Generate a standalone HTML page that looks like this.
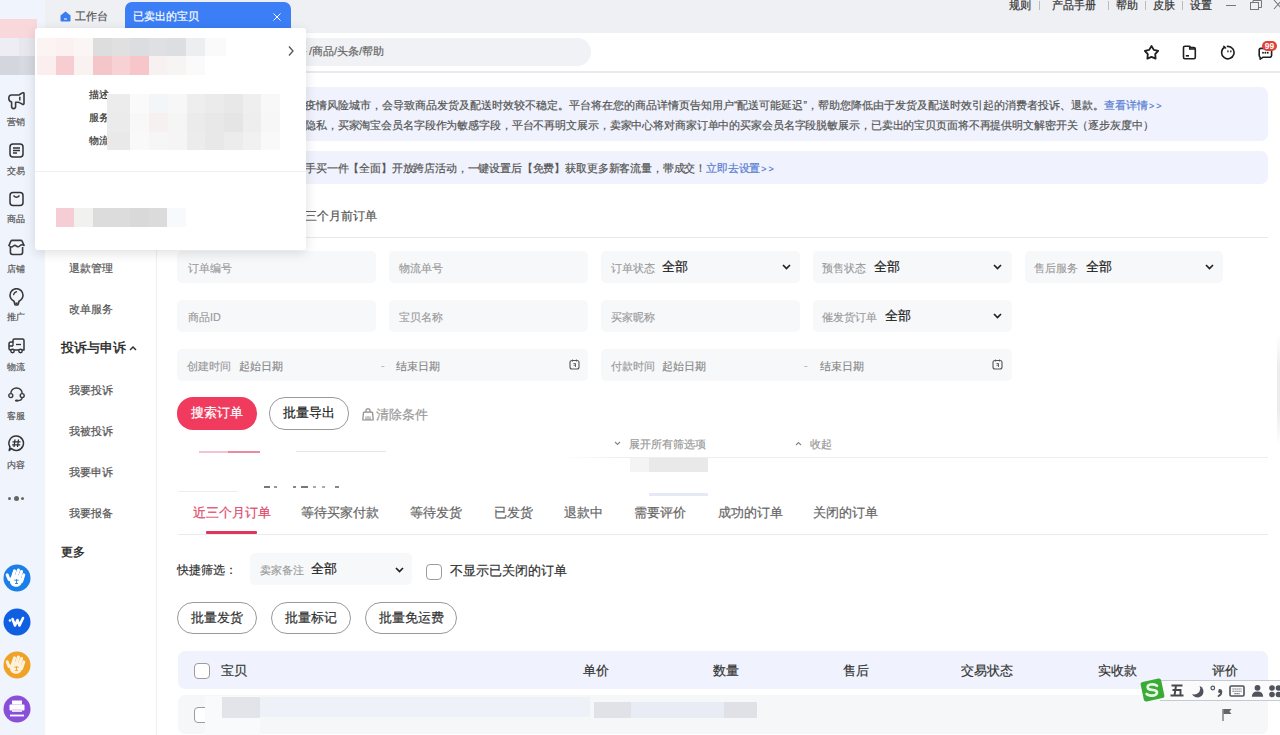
<!DOCTYPE html>
<html><head><meta charset="utf-8">
<style>
html,body{margin:0;padding:0}
body{width:1280px;height:735px;overflow:hidden;position:relative;background:#fff;font-family:"Liberation Sans",sans-serif;color:#333}
.a{position:absolute;white-space:nowrap;line-height:1}
.t{position:absolute;white-space:nowrap;line-height:14px;height:14px;-webkit-text-stroke:0.2px currentColor}
.inp{position:absolute;background:#f7f8fa;border-radius:5px;height:32px}
.ph{position:absolute;font-size:10.8px;color:#9a9a9a;line-height:14px;white-space:nowrap;-webkit-text-stroke:0.15px currentColor}
.val{position:absolute;font-size:13px;color:#222;line-height:14px;white-space:nowrap;-webkit-text-stroke:0.2px currentColor}
.btn{position:absolute;height:30px;border:1px solid #9a9a9a;border-radius:16px;box-sizing:border-box;font-size:12.5px;color:#333;line-height:28px;text-align:center;white-space:nowrap;-webkit-text-stroke:0.2px currentColor}
.mz{position:absolute}
.tf{display:inline-block;width:1em;-webkit-text-fill-color:transparent;-webkit-text-stroke:0 transparent;position:relative}
.tf::before{content:'';position:absolute;left:.06em;right:.06em;top:50%;height:.88em;margin-top:-.47em;background:currentColor;opacity:.39}
.tp::before{opacity:.1}
</style></head><body>

<!-- ===== top bar ===== -->
<div class="a" style="left:0;top:0;width:1280px;height:33px;background:#eef0f4"></div>
<!-- left sidebar -->
<div class="a" style="left:0;top:0;width:45px;height:735px;background:#f0f4fd"></div>

<!-- tab 工作台 -->
<svg class="a" style="left:60px;top:11px" width="11" height="11" viewBox="0 0 11 11"><path d="M5.5 0.5 L10.5 4.5 V9.5 Q10.5 10.5 9.5 10.5 H1.5 Q0.5 10.5 0.5 9.5 V4.5 Z" fill="#3b7cf0"/><rect x="4" y="7.5" width="3" height="1" fill="#fff"/></svg>
<div class="t" style="left:75px;top:9px;font-size:11px;color:#555">工作台</div>
<!-- active tab -->
<div class="a" style="left:125px;top:2px;width:166px;height:31px;background:#3b7ef6;border-radius:7px 7px 0 0"></div>
<div class="t" style="left:133px;top:9px;font-size:10.8px;color:#fff">已卖出的宝贝</div>
<svg class="a" style="left:273px;top:13px" width="8" height="8" viewBox="0 0 8 8"><path d="M0.5 0.5 L7.5 7.5 M7.5 0.5 L0.5 7.5" stroke="#fff" stroke-width="1"/></svg>

<!-- top right links -->
<div class="t" style="left:1009px;top:-2px;font-size:10.8px;color:#333">规则</div>
<div class="a" style="left:1039px;top:1px;width:1px;height:9px;background:#bbb"></div>
<div class="t" style="left:1052px;top:-2px;font-size:10.8px;color:#333">产品手册</div>
<div class="a" style="left:1108px;top:1px;width:1px;height:9px;background:#bbb"></div>
<div class="t" style="left:1116px;top:-2px;font-size:10.8px;color:#333">帮助</div>
<div class="a" style="left:1145px;top:1px;width:1px;height:9px;background:#bbb"></div>
<div class="t" style="left:1153px;top:-2px;font-size:10.8px;color:#333">皮肤</div>
<div class="a" style="left:1182px;top:1px;width:1px;height:9px;background:#bbb"></div>
<div class="t" style="left:1190px;top:-2px;font-size:10.8px;color:#333">设置</div>
<div class="a" style="left:1226px;top:5px;width:10px;height:1px;background:#777"></div>
<svg class="a" style="left:1249px;top:0px" width="14" height="11" viewBox="0 0 14 11"><rect x="1.5" y="2.5" width="8" height="7" fill="none" stroke="#777" stroke-width="1"/><path d="M4 2.5 V0.5 H12.5 V7.5 H9.5" fill="none" stroke="#777" stroke-width="1"/></svg>
<svg class="a" style="left:1273px;top:0px" width="8" height="10" viewBox="0 0 8 10"><path d="M1 0 L9 9 M9 0 L1 9" stroke="#777" stroke-width="1.1"/></svg>

<!-- ===== header bar ===== -->
<div class="a" style="left:45px;top:33px;width:1235px;height:38px;background:#fff"></div>
<div class="a" style="left:45px;top:71px;width:1235px;height:2px;background:#e9eaee"></div>
<div class="a" style="left:160px;top:38px;width:431px;height:28px;background:#f1f2f5;border-radius:14px"></div>
<div class="t" style="left:285px;top:44px;font-size:11px;color:#666">服务<span style="margin-left:2px">/商品/头条/帮助</span></div>

<!-- header icons -->
<svg class="a" style="left:1143px;top:44px" width="17" height="17" viewBox="0 0 17 17"><path d="M8.50 2.00 L10.79 5.84 L15.16 6.84 L12.21 10.21 L12.61 14.66 L8.50 12.90 L4.39 14.66 L4.79 10.21 L1.84 6.84 L6.21 5.84 Z" fill="none" stroke="#1f1f1f" stroke-width="1.8" stroke-linejoin="round"/></svg>
<svg class="a" style="left:1182px;top:45px" width="15" height="15" viewBox="0 0 15 15"><path d="M1.5 2.6 Q1.5 1.2 2.9 1.2 H7.6 L8.6 2.6 H11.9 Q13.3 2.6 13.3 4 V12.3 Q13.3 13.7 11.9 13.7 H2.9 Q1.5 13.7 1.5 12.3 Z" fill="none" stroke="#1f1f1f" stroke-width="1.6" stroke-linejoin="round"/><path d="M7.6 1.2 V4 H13.3" fill="none" stroke="#1f1f1f" stroke-width="1.3"/><rect x="3.8" y="10" width="3.2" height="1.6" fill="#1f1f1f"/></svg>
<svg class="a" style="left:1220px;top:45px" width="15" height="15" viewBox="0 0 15 15"><path d="M4.6 2.3 A6.2 6.2 0 1 0 7.5 1.4" fill="none" stroke="#1f1f1f" stroke-width="1.6" stroke-linecap="round"/><path d="M3.8 1.2 L5.6 3" stroke="#1f1f1f" stroke-width="1.5" stroke-linecap="round"/><rect x="7.3" y="5.2" width="1.3" height="2.2" rx="0.6" fill="#1f1f1f"/><rect x="10.2" y="5.2" width="1.3" height="2.2" rx="0.6" fill="#1f1f1f"/></svg>
<svg class="a" style="left:1258px;top:47px" width="15" height="13" viewBox="0 0 15 13"><path d="M1.2 3 Q1.2 1.4 2.8 1.4 H12 Q13.6 1.4 13.6 3 V8.6 Q13.6 10.2 12 10.2 H5.2 L2.2 12.2 V10.2 Q1.2 10 1.2 8.6 Z" fill="none" stroke="#1f1f1f" stroke-width="1.6" stroke-linejoin="round"/><circle cx="5" cy="5.8" r="0.95" fill="#1f1f1f"/><circle cx="7.4" cy="5.8" r="0.95" fill="#1f1f1f"/><circle cx="9.8" cy="5.8" r="0.95" fill="#1f1f1f"/></svg>
<div class="a" style="left:1262px;top:41px;width:15px;height:10px;border-radius:5px;background:#df4139;color:#fff;font-size:8.5px;line-height:10px;text-align:center;font-weight:bold">99</div>

<!-- ===== secondary sidebar ===== -->
<div class="a" style="left:156px;top:72px;width:1px;height:663px;background:#f0f0f2"></div>
<div class="t" style="left:69px;top:261px;font-size:11px;color:#555">退款管理</div>
<div class="t" style="left:69px;top:302px;font-size:11px;color:#555">改单服务</div>
<div class="t" style="left:61px;top:341px;font-size:12.6px;color:#222;-webkit-text-stroke:0.35px #222">投诉与申诉</div>
<svg class="a" style="left:129px;top:345px" width="8" height="6" viewBox="0 0 8 6"><path d="M1 5 L4 2 L7 5" fill="none" stroke="#333" stroke-width="1.5"/></svg>
<div class="t" style="left:69px;top:383px;font-size:11px;color:#555">我要投诉</div>
<div class="t" style="left:69px;top:424px;font-size:11px;color:#555">我被投诉</div>
<div class="t" style="left:69px;top:465px;font-size:11px;color:#555">我要申诉</div>
<div class="t" style="left:69px;top:506px;font-size:11px;color:#555">我要报备</div>
<div class="t" style="left:61px;top:545px;font-size:12.2px;color:#222;-webkit-text-stroke:0.35px #222">更多</div>

<!-- ===== left icon sidebar ===== -->
<!-- mosaic avatar blocks -->
<div class="mz" style="left:0;top:19px;width:37px;height:19px;background:#f8d8db"></div>
<div class="mz" style="left:0;top:38px;width:19px;height:18px;background:#eceef3"></div>
<div class="mz" style="left:19px;top:38px;width:18px;height:18px;background:#e6e8ed"></div>
<div class="mz" style="left:0;top:56px;width:19px;height:19px;background:#d3d6dd"></div>
<div class="mz" style="left:19px;top:56px;width:18px;height:19px;background:#d6d9e0"></div>

<svg class="a" style="left:8px;top:92px" width="18" height="18" viewBox="0 0 18 18"><path d="M3.5 3 L10 3 Q11 3 12 2.3 L14.5 0.9 Q16 0.2 16 1.8 V11.3 Q16 12.9 14.5 12.2 L12 10.9 Q11 10.3 10 10.3 H7.6 V14.6 Q7.6 16.6 5.6 16.6 Q3.6 16.6 3.6 14.6 V10 Q0.8 9.5 0.8 6.6 Q0.8 3 3.5 3 Z" fill="none" stroke="#3a3a3a" stroke-width="1.6" stroke-linejoin="round"/><path d="M11.8 5.3 V8" stroke="#3a3a3a" stroke-width="1.5" stroke-linecap="round"/></svg>
<div class="t" style="left:7px;top:115px;font-size:9px;color:#555">营销</div>
<svg class="a" style="left:9px;top:143px" width="15" height="15" viewBox="0 0 15 15"><rect x="1" y="1" width="13" height="13" rx="3" fill="none" stroke="#333" stroke-width="1.5"/><path d="M4 5 H11 M4 7.5 H11 M4 10 H8" stroke="#333" stroke-width="1.4"/></svg>
<div class="t" style="left:7px;top:164px;font-size:9px;color:#555">交易</div>
<svg class="a" style="left:9px;top:191px" width="15" height="16" viewBox="0 0 15 16"><rect x="1" y="1.5" width="13" height="13" rx="3" fill="none" stroke="#333" stroke-width="1.5"/><path d="M4.5 4.5 Q7.5 8 10.5 4.5" fill="none" stroke="#333" stroke-width="1.4"/></svg>
<div class="t" style="left:7px;top:212px;font-size:9px;color:#555">商品</div>
<svg class="a" style="left:8px;top:239px" width="17" height="17" viewBox="0 0 17 17"><path d="M1 6.4 L2.8 2.3 Q3.2 1.4 4.3 1.4 H12.7 Q13.8 1.4 14.2 2.3 L16 6.4" fill="none" stroke="#3a3a3a" stroke-width="1.6" stroke-linejoin="round" stroke-linecap="round"/><path d="M2.4 8 V13.3 Q2.4 15.5 4.6 15.5 H12.4 Q14.6 15.5 14.6 13.3 V8" fill="none" stroke="#3a3a3a" stroke-width="1.6"/><path d="M1 6.4 Q3.2 9.2 5.4 7 Q6.9 5.7 8.5 7.1 Q10.1 8.5 11.6 7 Q13.8 4.9 16 6.4" fill="none" stroke="#3a3a3a" stroke-width="1.5" stroke-linejoin="round"/></svg>
<div class="t" style="left:7px;top:262px;font-size:9px;color:#555">店铺</div>
<svg class="a" style="left:9px;top:288px" width="15" height="18" viewBox="0 0 15 18"><path d="M5 13.2 Q1 11 1 7.2 A6.5 6.5 0 0 1 14 7.2 Q14 11 10 13.2 L9.2 16.2 Q9 17 8.2 17 H6.8 Q6 17 5.8 16.2 Z" fill="none" stroke="#3a3a3a" stroke-width="1.6" stroke-linejoin="round"/><path d="M4.6 6.6 Q5.2 4.4 7.4 3.8" fill="none" stroke="#3a3a3a" stroke-width="1.4" stroke-linecap="round"/><path d="M6.3 15.5 H8.7" stroke="#3a3a3a" stroke-width="2"/></svg>
<div class="t" style="left:7px;top:310px;font-size:9px;color:#555">推广</div>
<svg class="a" style="left:8px;top:338px" width="17" height="16" viewBox="0 0 17 16"><path d="M1 6 Q1 4 3 4 H5 V2.5 Q5 1 6.5 1 H14.5 Q16 1 16 2.5 V12 H2.5 Q1 12 1 10.5 Z" fill="none" stroke="#333" stroke-width="1.5" stroke-linejoin="round"/><path d="M1 8 H5 M5 4 V8" stroke="#333" stroke-width="1.3"/><circle cx="4.5" cy="13" r="1.7" fill="#eef2fb" stroke="#333" stroke-width="1.4"/><circle cx="12.5" cy="13" r="1.7" fill="#eef2fb" stroke="#333" stroke-width="1.4"/><path d="M8 6.5 H13" stroke="#333" stroke-width="1.3"/></svg>
<div class="t" style="left:7px;top:360px;font-size:9px;color:#555">物流</div>
<svg class="a" style="left:8px;top:386px" width="17" height="17" viewBox="0 0 17 17"><path d="M2.8 7.6 A5.7 5.7 0 0 1 14.2 7.6" fill="none" stroke="#3a3a3a" stroke-width="1.5"/><circle cx="2.8" cy="9.6" r="2" fill="none" stroke="#3a3a3a" stroke-width="1.4"/><circle cx="14.2" cy="9.6" r="2" fill="none" stroke="#3a3a3a" stroke-width="1.4"/><path d="M14.2 11.6 Q13.8 14.6 10 14.6" fill="none" stroke="#3a3a3a" stroke-width="1.3"/><ellipse cx="8.8" cy="14.6" rx="1.9" ry="1.2" fill="#3a3a3a"/></svg>
<div class="t" style="left:7px;top:409px;font-size:9px;color:#555">客服</div>
<svg class="a" style="left:8px;top:435px" width="17" height="17" viewBox="0 0 17 17"><path d="M8.5 1 A7.2 7.2 0 1 1 3.5 13.6 L1.2 15.5 L2 12 A7.2 7.2 0 0 1 8.5 1 Z" fill="none" stroke="#333" stroke-width="1.5" stroke-linejoin="round"/><path d="M7 4.5 L6 12 M10.5 4.5 L9.5 12 M4.5 6.8 H12.5 M4.2 9.8 H12.2" stroke="#333" stroke-width="1.3"/></svg>
<div class="t" style="left:7px;top:458px;font-size:9px;color:#555">内容</div>
<div class="a" style="left:8px;top:497px;width:3px;height:3px;border-radius:50%;background:#666"></div>
<div class="a" style="left:14px;top:496px;width:5px;height:5px;border-radius:50%;background:#666"></div>
<div class="a" style="left:21px;top:497px;width:3px;height:3px;border-radius:50%;background:#666"></div>

<!-- app circles -->
<svg class="a" style="left:2.5px;top:564px" width="28" height="28" viewBox="0 0 28 28"><circle cx="14" cy="14" r="13.5" fill="#1b7fe8"/><g transform="rotate(18 14 15)" fill="#fff"><ellipse cx="13.5" cy="17" rx="6.3" ry="6"/><rect x="7.6" y="6.5" width="3.2" height="11" rx="1.6"/><rect x="11" y="4.5" width="3.2" height="12" rx="1.6"/><rect x="14.4" y="5" width="3.2" height="12" rx="1.6"/><rect x="17.7" y="7.5" width="3" height="10" rx="1.5"/><rect x="3.5" y="12" width="3" height="8" rx="1.5" transform="rotate(-40 5 16)"/></g><path d="M11.3 16.2 H15.7 M13.5 15.2 V19.5 M12 19.5 H15" stroke="#1b7fe8" stroke-width="0.9"/></svg>
<svg class="a" style="left:2.5px;top:608px" width="28" height="28" viewBox="0 0 28 28"><circle cx="14" cy="14" r="13.5" fill="#0f5fe2"/><path d="M9.5 11 L12 17.5 L14.5 12 L16.5 17.5 L20 10" fill="none" stroke="#fff" stroke-width="2.6" stroke-linecap="round" stroke-linejoin="round"/><circle cx="7" cy="12.5" r="1.3" fill="#fff"/></svg>
<svg class="a" style="left:2.5px;top:651px" width="28" height="28" viewBox="0 0 28 28"><circle cx="14" cy="14" r="13.5" fill="#f0a226"/><g transform="rotate(18 14 15)" fill="#fdf1dc"><ellipse cx="13.5" cy="17" rx="6.3" ry="6"/><rect x="7.6" y="6.5" width="3.2" height="11" rx="1.6"/><rect x="11" y="4.5" width="3.2" height="12" rx="1.6"/><rect x="14.4" y="5" width="3.2" height="12" rx="1.6"/><rect x="17.7" y="7.5" width="3" height="10" rx="1.5"/><rect x="3.5" y="12" width="3" height="8" rx="1.5" transform="rotate(-40 5 16)"/></g><path d="M11.3 16.2 H15.7 M13.5 15.2 V19.5 M12 19.5 H15" stroke="#f0a226" stroke-width="0.9"/></svg>
<svg class="a" style="left:2.5px;top:695px" width="28" height="28" viewBox="0 0 28 28"><circle cx="14" cy="14" r="13.5" fill="#8a4fd8"/><rect x="9" y="5.5" width="10" height="4" fill="#fff"/><rect x="6.5" y="9.5" width="15" height="6" rx="1" fill="#fff"/><rect x="9" y="14" width="10" height="3" fill="#e8dcf8"/><path d="M7 20.5 H21" stroke="#fff" stroke-width="1.8"/></svg>

<!-- ===== main ===== -->
<!-- notice banners -->
<div class="a" style="left:168px;top:87px;width:1100px;height:54px;background:#f0f3fd;border-radius:7px"></div>
<div class="t" style="left:305px;top:98px;font-size:10.5px;color:#555">疫情风险城市，会导致商品发货及配送时效较不稳定。平台将在您的商品详情页告知用户“配送可能延迟”，帮助您降低由于发货及配送时效引起的消费者投诉、退款。<span style="color:#5a80d2">查看详情<span style="font-size:9px;letter-spacing:2px;margin-left:1px">&gt;&gt;</span></span></div>
<div class="t" style="left:305px;top:118px;font-size:10.5px;color:#555;letter-spacing:-0.12px">隐私，买家淘宝会员名字段作为敏感字段，平台不再明文展示，卖家中心将对商家订单中的买家会员名字段脱敏展示，已卖出的宝贝页面将不再提供明文解密开关（逐步灰度中）</div>
<div class="a" style="left:168px;top:151px;width:1100px;height:33px;background:#f0f3fd;border-radius:7px"></div>
<div class="t" style="left:305px;top:161px;font-size:10.5px;color:#555;letter-spacing:-0.16px">手买一件【全面】开放跨店活动，一键设置后【免费】获取更多新客流量，带成交！<span style="color:#5a80d2">立即去设置<span style="font-size:9px;letter-spacing:2px;margin-left:1px">&gt;&gt;</span></span></div>

<!-- order-age tabs -->
<div class="t" style="left:305px;top:209px;font-size:12px;color:#555">三个月前订单</div>
<div class="a" style="left:178px;top:237px;width:1090px;height:1px;background:#e8e8ea"></div>

<!-- form row 1 -->
<div class="inp" style="left:177px;top:251px;width:199px"></div>
<div class="ph" style="left:188px;top:261px">订单编号</div>
<div class="inp" style="left:389px;top:251px;width:199px"></div>
<div class="ph" style="left:399px;top:261px">物流单号</div>
<div class="inp" style="left:601px;top:251px;width:199px"></div>
<div class="ph" style="left:611px;top:261px">订单状态</div>
<div class="val" style="left:662px;top:260px">全部</div>
<svg class="a" style="left:782px;top:264px" width="9" height="6" viewBox="0 0 9 6"><path d="M1 1 L4.5 4.5 L8 1" fill="none" stroke="#222" stroke-width="1.7"/></svg>
<div class="inp" style="left:813px;top:251px;width:199px"></div>
<div class="ph" style="left:822px;top:261px">预售状态</div>
<div class="val" style="left:874px;top:260px">全部</div>
<svg class="a" style="left:993px;top:264px" width="9" height="6" viewBox="0 0 9 6"><path d="M1 1 L4.5 4.5 L8 1" fill="none" stroke="#222" stroke-width="1.7"/></svg>
<div class="inp" style="left:1025px;top:251px;width:198px"></div>
<div class="ph" style="left:1034px;top:261px">售后服务</div>
<div class="val" style="left:1086px;top:260px">全部</div>
<svg class="a" style="left:1205px;top:264px" width="9" height="6" viewBox="0 0 9 6"><path d="M1 1 L4.5 4.5 L8 1" fill="none" stroke="#222" stroke-width="1.7"/></svg>

<!-- form row 2 -->
<div class="inp" style="left:177px;top:300px;width:199px"></div>
<div class="ph" style="left:188px;top:310px">商品ID</div>
<div class="inp" style="left:389px;top:300px;width:199px"></div>
<div class="ph" style="left:399px;top:310px">宝贝名称</div>
<div class="inp" style="left:601px;top:300px;width:199px"></div>
<div class="ph" style="left:611px;top:310px">买家昵称</div>
<div class="inp" style="left:813px;top:300px;width:199px"></div>
<div class="ph" style="left:822px;top:310px">催发货订单</div>
<div class="val" style="left:885px;top:309px">全部</div>
<svg class="a" style="left:993px;top:313px" width="9" height="6" viewBox="0 0 9 6"><path d="M1 1 L4.5 4.5 L8 1" fill="none" stroke="#222" stroke-width="1.7"/></svg>

<!-- form row 3 -->
<div class="inp" style="left:177px;top:349px;width:411px"></div>
<div class="ph" style="left:187px;top:359px">创建时间</div>
<div class="ph" style="left:239px;top:359px;color:#888">起始日期</div>
<div class="ph" style="left:381px;top:358px;color:#bbb">-</div>
<div class="ph" style="left:396px;top:359px;color:#888">结束日期</div>
<svg class="a" style="left:569px;top:359px" width="11" height="11" viewBox="0 0 11 11"><rect x="1" y="1.5" width="9" height="8.5" rx="2" fill="none" stroke="#555" stroke-width="1.1"/><path d="M3.5 0.5 V2.5 M7.5 0.5 V2.5 M4.5 4.5 H6.5 V8 M4.5 6.2 H6.5" fill="none" stroke="#555" stroke-width="0.9"/></svg>
<div class="inp" style="left:601px;top:349px;width:411px"></div>
<div class="ph" style="left:611px;top:359px">付款时间</div>
<div class="ph" style="left:662px;top:359px;color:#888">起始日期</div>
<div class="ph" style="left:804px;top:358px;color:#bbb">-</div>
<div class="ph" style="left:820px;top:359px;color:#888">结束日期</div>
<svg class="a" style="left:992px;top:359px" width="11" height="11" viewBox="0 0 11 11"><rect x="1" y="1.5" width="9" height="8.5" rx="2" fill="none" stroke="#555" stroke-width="1.1"/><path d="M3.5 0.5 V2.5 M7.5 0.5 V2.5 M4.5 4.5 H6.5 V8 M4.5 6.2 H6.5" fill="none" stroke="#555" stroke-width="0.9"/></svg>

<!-- search buttons -->
<div class="btn" style="left:177px;top:397px;width:80px;height:33px;border:none;background:#f03b5e;color:#fff;line-height:33px;font-weight:500">搜索订单</div>
<div class="btn" style="left:269px;top:397px;width:80px;height:33px;line-height:31px;font-weight:500;color:#222">批量导出</div>
<svg class="a" style="left:362px;top:408px" width="12" height="13" viewBox="0 0 12 13"><path d="M4 4 V2.2 Q4 0.8 5.5 0.8 H6.5 Q8 0.8 8 2.2 V4" fill="none" stroke="#8a8a8a" stroke-width="1.2"/><path d="M2.4 4.2 H9.6 Q10.4 4.2 10.6 5 L11.2 12 H0.8 L1.4 5 Q1.6 4.2 2.4 4.2 Z" fill="none" stroke="#8a8a8a" stroke-width="1.2" stroke-linejoin="round"/><path d="M4 8.5 V12 M6 8 V12 M8 8.5 V12" stroke="#8a8a8a" stroke-width="1"/></svg>
<div class="t" style="left:376px;top:408px;font-size:12.6px;color:#999">清除条件</div>

<!-- expand filters -->
<svg class="a" style="left:614px;top:441px" width="7" height="5" viewBox="0 0 7 5"><path d="M1 1 L3.5 3.5 L6 1" fill="none" stroke="#888" stroke-width="1.2"/></svg>
<div class="t" style="left:629px;top:437px;font-size:10.7px;color:#999">展开所有筛选项</div>
<svg class="a" style="left:795px;top:441px" width="7" height="5" viewBox="0 0 7 5"><path d="M1 4 L3.5 1.5 L6 4" fill="none" stroke="#888" stroke-width="1.2"/></svg>
<div class="t" style="left:810px;top:437px;font-size:10.7px;color:#999">收起</div>
<div class="a" style="left:560px;top:457px;width:708px;height:1px;background:linear-gradient(90deg,rgba(240,240,243,0),#eeeef1 60px)"></div>
<div class="a" style="left:178px;top:491px;width:60px;height:1px;background:#ededed"></div>
<!-- ghost strip -->
<div class="a" style="left:199px;top:451px;width:60px;height:2px;background:#f4c3cf"></div>
<div class="a" style="left:228px;top:451px;width:32px;height:2px;background:#ea8aa2"></div>
<div class="a" style="left:296px;top:451px;width:90px;height:1px;background:#e6e6e6"></div>
<div class="a" style="left:630px;top:458px;width:19px;height:14px;background:#f4f4f4"></div>
<div class="a" style="left:649px;top:458px;width:59px;height:14px;background:#e9e9e9"></div>
<div class="a" style="left:649px;top:493px;width:59px;height:3px;background:#e4e9f5"></div>
<div class="a" style="left:264px;top:486px;width:6px;height:2px;background:#777"></div>
<div class="a" style="left:274px;top:486px;width:3px;height:2px;background:#999"></div>
<div class="a" style="left:293px;top:486px;width:3px;height:2px;background:#888"></div>
<div class="a" style="left:301px;top:486px;width:7px;height:2px;background:#777"></div>
<div class="a" style="left:313px;top:486px;width:3px;height:2px;background:#aaa"></div>
<div class="a" style="left:322px;top:486px;width:3px;height:2px;background:#aaa"></div>
<div class="a" style="left:335px;top:486px;width:4px;height:2px;background:#888"></div>

<!-- status tabs -->
<div class="t" style="left:193px;top:506px;font-size:12.6px;color:#e24a6c">近三个月订单</div>
<div class="a" style="left:206px;top:531px;width:51px;height:3px;background:#e0345c;border-radius:1px"></div>
<div class="t" style="left:301px;top:506px;font-size:12.6px;color:#666">等待买家付款</div>
<div class="t" style="left:410px;top:506px;font-size:12.6px;color:#666">等待发货</div>
<div class="t" style="left:494px;top:506px;font-size:12.6px;color:#666">已发货</div>
<div class="t" style="left:564px;top:506px;font-size:12.6px;color:#666">退款中</div>
<div class="t" style="left:634px;top:506px;font-size:12.6px;color:#666">需要评价</div>
<div class="t" style="left:718px;top:506px;font-size:12.6px;color:#666">成功的订单</div>
<div class="t" style="left:813px;top:506px;font-size:12.6px;color:#666">关闭的订单</div>
<div class="a" style="left:178px;top:534px;width:1090px;height:1px;background:#ebebed"></div>

<!-- quick filter -->
<div class="t" style="left:177px;top:563px;font-size:12px;color:#333">快捷筛选：</div>
<div class="inp" style="left:250px;top:553px;width:162px;height:32px"></div>
<div class="ph" style="left:260px;top:563px">卖家备注</div>
<div class="val" style="left:311px;top:562px">全部</div>
<svg class="a" style="left:395px;top:567px" width="9" height="6" viewBox="0 0 9 6"><path d="M1 1 L4.5 4.5 L8 1" fill="none" stroke="#222" stroke-width="1.7"/></svg>
<div class="a" style="left:426px;top:564px;width:16px;height:16px;box-sizing:border-box;border:1px solid #9c9c9c;border-radius:4px;background:#fff"></div>
<div class="t" style="left:450px;top:564px;font-size:12.5px;color:#333">不显示已关闭的订单</div>

<!-- batch buttons -->
<div class="btn" style="left:177px;top:602px;width:80px;height:32px;line-height:30px">批量发货</div>
<div class="btn" style="left:271px;top:602px;width:80px;height:32px;line-height:30px">批量标记</div>
<div class="btn" style="left:365px;top:602px;width:92px;height:32px;line-height:30px">批量免运费</div>

<!-- table header -->
<div class="a" style="left:178px;top:651px;width:1090px;height:38px;background:#f0f3fd;border-radius:7px"></div>
<div class="a" style="left:194px;top:663px;width:16px;height:16px;box-sizing:border-box;border:1px solid #9c9c9c;border-radius:4px;background:#fff"></div>
<div class="t" style="left:221px;top:664px;font-size:12.6px;color:#333">宝贝</div>
<div class="t" style="left:583px;top:664px;font-size:12.6px;color:#333">单价</div>
<div class="t" style="left:713px;top:664px;font-size:12.6px;color:#333">数量</div>
<div class="t" style="left:843px;top:664px;font-size:12.6px;color:#333">售后</div>
<div class="t" style="left:961px;top:664px;font-size:12.6px;color:#333">交易状态</div>
<div class="t" style="left:1098px;top:664px;font-size:12.6px;color:#333">实收款</div>
<div class="t" style="left:1212px;top:664px;font-size:12.6px;color:#333">评价</div>

<!-- table row -->
<div class="a" style="left:178px;top:695px;width:1090px;height:39px;background:#f6f7f9;border-radius:7px"></div>
<div class="a" style="left:194px;top:707px;width:16px;height:16px;box-sizing:border-box;border:1px solid #9c9c9c;border-radius:4px;background:#fff"></div>
<div class="mz" style="left:205px;top:696px;width:55px;height:39px;background:#f9fafb"></div>
<div class="mz" style="left:222px;top:697px;width:38px;height:21px;background:#e2e4e9"></div>
<div class="mz" style="left:260px;top:697px;width:330px;height:20px;background:#eef1f7"></div>
<div class="mz" style="left:594px;top:702px;width:37px;height:16px;background:#e0e2e8"></div>
<div class="mz" style="left:631px;top:702px;width:93px;height:16px;background:#e8ecf4"></div>
<div class="mz" style="left:724px;top:702px;width:33px;height:16px;background:#dfe1e6"></div>
<svg class="a" style="left:1222px;top:708px" width="10" height="13" viewBox="0 0 10 13"><path d="M1 1 V13" stroke="#666" stroke-width="1.2"/><path d="M1.5 1 H9.5 L7.5 3.5 L9.5 6 H1.5 Z" fill="#666"/></svg>

<!-- IME toolbar -->
<div class="a" style="left:1160px;top:680px;width:120px;height:21px;box-sizing:border-box;background:#fbfbfc;border-top:1.5px solid #c5c9d1;border-bottom:1.5px solid #c5c9d1"></div>
<svg class="a" style="left:1139px;top:677px" width="27" height="26" viewBox="0 0 27 26"><rect x="3" y="3" width="21" height="20" rx="2.5" fill="#3aab37" transform="rotate(-12 13.5 13)"/><path d="M18 8.8 Q15.5 6.8 11.5 7.6 Q7.5 8.6 9 11.5 Q10.5 13 14.2 13 Q18.2 13.4 18 15.8 Q17 19 11.8 18.6 Q8.8 18.2 7.6 17" fill="none" stroke="#e9f7e6" stroke-width="2.6" stroke-linecap="round"/></svg>
<svg class="a" style="left:1170px;top:684px" width="14" height="13" viewBox="0 0 14 13"><path d="M1.5 1.5 H12.5 M6 1.5 L4.5 11.5 M2.5 6 H10.5 V11.5 M0.5 11.5 H13.5" fill="none" stroke="#45484f" stroke-width="1.9"/></svg>
<svg class="a" style="left:1190px;top:684px" width="14" height="14" viewBox="0 0 14 14"><defs><mask id="mm"><rect width="14" height="14" fill="#fff"/><circle cx="4.2" cy="4.6" r="6" fill="#000"/></mask></defs><circle cx="7.5" cy="7.5" r="6" fill="#4f535c" mask="url(#mm)"/></svg>
<svg class="a" style="left:1210px;top:685px" width="13" height="12" viewBox="0 0 13 12"><circle cx="2.8" cy="3" r="1.8" fill="none" stroke="#4f535c" stroke-width="1.2"/><path d="M9.5 5 Q11.3 5 11.3 7 Q11.3 9.8 8.6 11" fill="none" stroke="#4f535c" stroke-width="1.9" stroke-linecap="round"/><circle cx="9.6" cy="6.4" r="1.5" fill="#4f535c"/></svg>
<svg class="a" style="left:1229px;top:685px" width="16" height="12" viewBox="0 0 16 12"><rect x="1" y="1" width="14" height="10" rx="1.2" fill="none" stroke="#4f535c" stroke-width="1.6"/><path d="M3.5 4 H12.5 M3.5 6.3 H12.5 M5.5 8.6 H10.5" stroke="#4f535c" stroke-width="1.1" stroke-dasharray="1.2 0.8"/></svg>
<svg class="a" style="left:1251px;top:684px" width="13" height="14" viewBox="0 0 13 14"><circle cx="6.5" cy="3.8" r="2.9" fill="#4f535c"/><path d="M0.8 12.8 Q1 7.6 6.5 7.6 Q12 7.6 12.2 12.8 Z" fill="#4f535c"/></svg>
<svg class="a" style="left:1269px;top:684px" width="11" height="14" viewBox="0 0 11 14"><circle cx="3" cy="4" r="2.8" fill="#4f535c"/><circle cx="9.5" cy="4" r="2.8" fill="#4f535c"/><circle cx="3" cy="10.5" r="2.8" fill="#4f535c"/><circle cx="9.5" cy="10.5" r="2.8" fill="#4f535c"/></svg>

<div class="a" style="left:1277px;top:335px;width:3px;height:110px;background:linear-gradient(180deg,rgba(235,235,238,0),#ececef 30%,#ececef 70%,rgba(235,235,238,0))"></div>

<!-- ===== popup ===== -->
<div class="a" style="left:35px;top:28px;width:271px;height:222px;background:#fff;border-radius:3px;box-shadow:0 3px 12px rgba(0,0,0,0.13)"></div>
<!-- mosaic row a (y38-56) -->
<div class="mz" style="left:37px;top:38px;width:19px;height:18px;background:#fcf3f3"></div>
<div class="mz" style="left:56px;top:38px;width:18px;height:18px;background:#fcf1f1"></div>
<div class="mz" style="left:74px;top:38px;width:19px;height:18px;background:#fbf6f5"></div>
<div class="mz" style="left:93px;top:38px;width:19px;height:18px;background:#dddddd"></div>
<div class="mz" style="left:112px;top:38px;width:18px;height:18px;background:#e0e0e0"></div>
<div class="mz" style="left:130px;top:38px;width:19px;height:18px;background:#dcdde0"></div>
<div class="mz" style="left:149px;top:38px;width:18px;height:18px;background:#dfe0e3"></div>
<div class="mz" style="left:167px;top:38px;width:19px;height:18px;background:#dcdee2"></div>
<div class="mz" style="left:186px;top:38px;width:19px;height:18px;background:#eceef0"></div>
<div class="mz" style="left:205px;top:38px;width:21px;height:18px;background:#fafafa"></div>
<!-- mosaic row b (y56-75) -->
<div class="mz" style="left:37px;top:56px;width:19px;height:19px;background:#fbeeee"></div>
<div class="mz" style="left:56px;top:56px;width:18px;height:19px;background:#f8cdd2"></div>
<div class="mz" style="left:74px;top:56px;width:19px;height:19px;background:#faf2f0"></div>
<div class="mz" style="left:93px;top:56px;width:19px;height:19px;background:#f5c6c9"></div>
<div class="mz" style="left:112px;top:56px;width:18px;height:19px;background:#f7d1d4"></div>
<div class="mz" style="left:130px;top:56px;width:19px;height:19px;background:#f6c6c9"></div>
<div class="mz" style="left:149px;top:56px;width:18px;height:19px;background:#f7f1f1"></div>
<div class="mz" style="left:167px;top:56px;width:19px;height:19px;background:#f7f4f4"></div>
<div class="mz" style="left:186px;top:56px;width:19px;height:19px;background:#fafafa"></div>
<svg class="a" style="left:287px;top:45px" width="8" height="12" viewBox="0 0 8 12"><path d="M2 1.5 L6 6 L2 10.5" fill="none" stroke="#555" stroke-width="1.3"/></svg>

<div class="t" style="left:89px;top:88px;font-size:10px;color:#333">描述</div>
<div class="a" style="left:110px;top:95px;width:1.5px;height:1.5px;background:#666"></div>
<div class="t" style="left:89px;top:111px;font-size:10px;color:#333">服务</div>
<div class="t" style="left:89px;top:134px;font-size:10px;color:#333">物流</div>
<!-- mosaic block 2 -->
<div class="mz" style="left:107px;top:94px;width:23px;height:19px;background:#ececec"></div>
<div class="mz" style="left:130px;top:94px;width:19px;height:19px;background:#fafafa"></div>
<div class="mz" style="left:149px;top:94px;width:19px;height:19px;background:#f3f6f8"></div>
<div class="mz" style="left:168px;top:94px;width:19px;height:19px;background:#f7f7f7"></div>
<div class="mz" style="left:187px;top:94px;width:18px;height:19px;background:#eeeeee"></div>
<div class="mz" style="left:205px;top:94px;width:19px;height:19px;background:#ebebeb"></div>
<div class="mz" style="left:224px;top:94px;width:19px;height:19px;background:#e8e8e8"></div>
<div class="mz" style="left:243px;top:94px;width:18px;height:19px;background:#efefef"></div>
<div class="mz" style="left:261px;top:94px;width:19px;height:19px;background:#f8f8f8"></div>
<div class="mz" style="left:107px;top:113px;width:23px;height:19px;background:#ebebeb"></div>
<div class="mz" style="left:130px;top:113px;width:19px;height:19px;background:#f8f8f8"></div>
<div class="mz" style="left:149px;top:113px;width:19px;height:19px;background:#f7f0f0"></div>
<div class="mz" style="left:168px;top:113px;width:19px;height:19px;background:#f5f5f5"></div>
<div class="mz" style="left:187px;top:113px;width:18px;height:19px;background:#ebebeb"></div>
<div class="mz" style="left:205px;top:113px;width:19px;height:19px;background:#e8e8e8"></div>
<div class="mz" style="left:224px;top:113px;width:19px;height:19px;background:#e5e5e5"></div>
<div class="mz" style="left:243px;top:113px;width:18px;height:19px;background:#eeeeee"></div>
<div class="mz" style="left:261px;top:113px;width:19px;height:19px;background:#f7f7f7"></div>
<div class="mz" style="left:107px;top:132px;width:23px;height:18px;background:#e9e9e9"></div>
<div class="mz" style="left:130px;top:132px;width:19px;height:18px;background:#f9f9f9"></div>
<div class="mz" style="left:149px;top:132px;width:19px;height:18px;background:#f6f6f6"></div>
<div class="mz" style="left:168px;top:132px;width:19px;height:18px;background:#f5f5f5"></div>
<div class="mz" style="left:187px;top:132px;width:18px;height:18px;background:#ececec"></div>
<div class="mz" style="left:205px;top:132px;width:19px;height:18px;background:#e8e8e8"></div>
<div class="mz" style="left:224px;top:132px;width:19px;height:18px;background:#ececec"></div>
<div class="mz" style="left:243px;top:132px;width:18px;height:18px;background:#f1f1f1"></div>
<div class="mz" style="left:261px;top:132px;width:19px;height:18px;background:#f9f9f9"></div>

<div class="a" style="left:35px;top:171px;width:271px;height:1px;background:#f0f0f0"></div>
<!-- mosaic row bottom -->
<div class="mz" style="left:56px;top:208px;width:18px;height:19px;background:#f6cdd4"></div>
<div class="mz" style="left:74px;top:208px;width:19px;height:19px;background:#f1f1ef"></div>
<div class="mz" style="left:93px;top:208px;width:37px;height:19px;background:#dcdcdc"></div>
<div class="mz" style="left:130px;top:208px;width:19px;height:19px;background:#d9d9d9"></div>
<div class="mz" style="left:149px;top:208px;width:18px;height:19px;background:#dbdbdb"></div>
<div class="mz" style="left:167px;top:208px;width:19px;height:19px;background:#f7f9fc"></div>

<script>
(function(){
 var s=document.createElement('span');
 s.style.cssText='position:absolute;left:-9999px;top:0;font-size:100px;white-space:nowrap;font-family:"Liberation Sans",sans-serif';
 s.textContent='\u5df2\u5356\u51fa\u7684\u5b9d\u8d1d';document.body.appendChild(s);
 var w=s.getBoundingClientRect().width;document.body.removeChild(s);
 if(w>=540) return;
 var re=/[\u2018-\u201f\u3000-\u303f\u3400-\u9fff\uff00-\uffef]/;
 var walker=document.createTreeWalker(document.body,NodeFilter.SHOW_TEXT,null);
 var nodes=[];while(walker.nextNode()){var n=walker.currentNode;var pn=n.parentNode.nodeName;if(pn!=='SCRIPT'&&pn!=='STYLE'&&re.test(n.nodeValue))nodes.push(n);}
 nodes.forEach(function(n){
   var f=document.createDocumentFragment(),buf='';
   for(var ch of n.nodeValue){
     if(re.test(ch)){ if(buf){f.appendChild(document.createTextNode(buf));buf='';}
       var sp=document.createElement('span');sp.className=/[\u2018-\u201f\u3000-\u303f\uff01-\uff0f\uff1a-\uff20\uff3b-\uff40\uff5b-\uff65]/.test(ch)?'tf tp':'tf';sp.textContent=ch;f.appendChild(sp);}
     else buf+=ch;
   }
   if(buf)f.appendChild(document.createTextNode(buf));
   n.parentNode.replaceChild(f,n);
 });
})();
</script>
</body></html>
